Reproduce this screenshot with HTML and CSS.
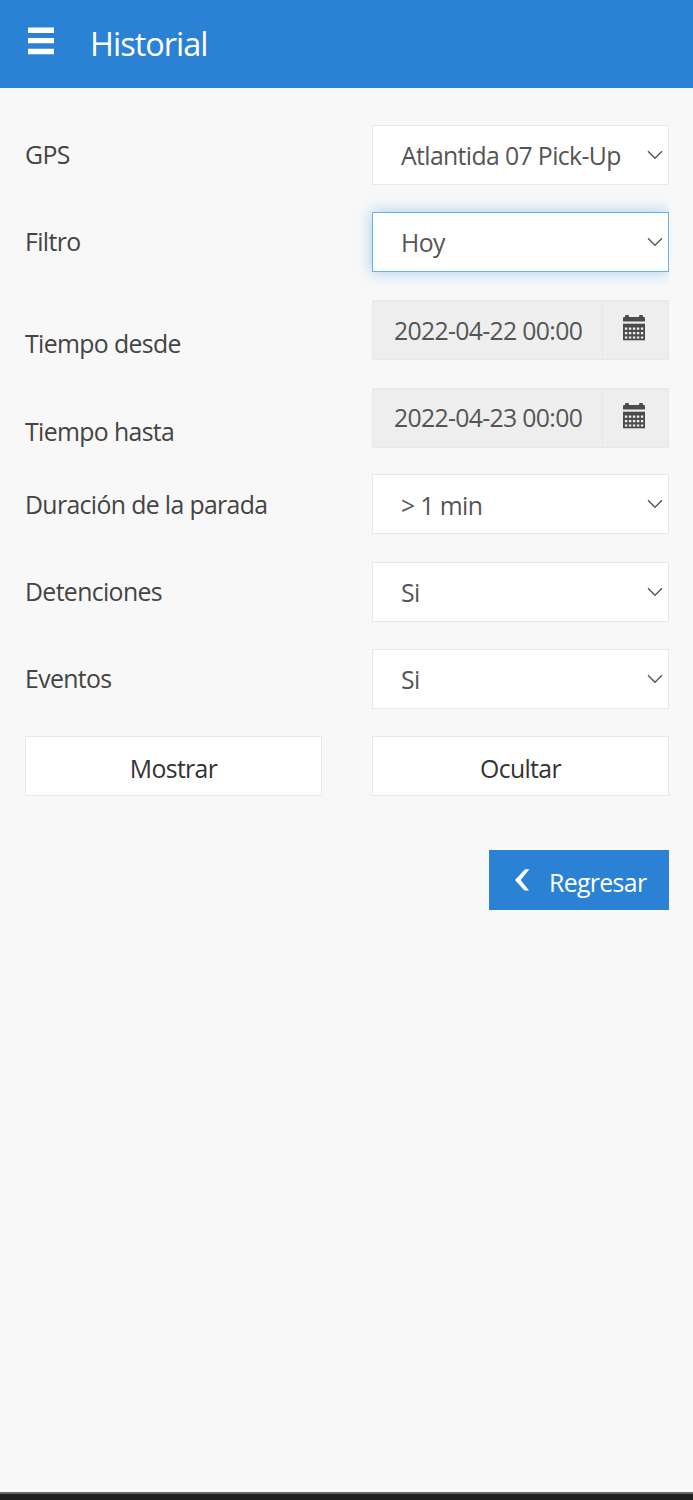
FILE: index.html
```html
<!DOCTYPE html>
<html lang="es">
<head>
  <meta charset="UTF-8">
  <meta name="viewport" content="width=device-width, initial-scale=1.0">
  <title>Historial</title>
  <link rel="stylesheet" href="styles.css">
</head>
<body>
  <!-- Icons -->
  <svg class="sprite">
    <symbol id="arrow" viewBox="0 0 16 10">
      <path d="M1 1.2L8 8.2L15 1.2" fill="none" stroke="currentColor" stroke-width="1.4"/>
    </symbol>
    <symbol id="calendar" viewBox="0 0 22 26">
      <path fill="currentColor" d="M0 6.5V3.2Q0 2 1.2 2H2V1.2Q2 0 3.2 0H4.8Q6 0 6 1.2V2H16V1.2Q16 0 17.2 0H18.8Q20 0 20 1.2V2H20.8Q22 2 22 3.2V6.5Z"/>
      <path fill="currentColor" d="M0 8.7H22V25.3H0Z"/>
      <path stroke="#eeeeee" stroke-width="2.2" stroke-dasharray="2.4 1.6" d="M1.9 13.6H20.2M1.9 18.1H20.2M1.9 22.5H20.2"/>
    </symbol>
  </svg>

  <header>
    <button class="menu">
      <svg width="26" height="28" viewBox="0 0 26 28"><path fill="#fff" d="M0 .4H26V6H0ZM0 10.9H26V16.3H0ZM0 21.7H26V27.2H0Z"/></svg>
    </button>
    <h1>Historial</h1>
  </header>

  <main>
    <form class="historial">
      <div class="row">
        <label for="gps">GPS</label>
        <div class="select">
          <select id="gps"><option>Atlantida 07 Pick-Up</option></select>
          <svg class="arrow"><use href="#arrow"/></svg>
        </div>
      </div>
      <div class="row">
        <label for="filtro">Filtro</label>
        <div class="select active">
          <select id="filtro"><option>Hoy</option></select>
          <svg class="arrow"><use href="#arrow"/></svg>
        </div>
      </div>
      <div class="row row-date">
        <label for="desde">Tiempo desde</label>
        <div class="date">
          <input id="desde" type="text" value="2022-04-22 00:00" readonly>
          <span class="addon"><svg class="calendar"><use href="#calendar"/></svg></span>
        </div>
      </div>
      <div class="row row-date">
        <label for="hasta">Tiempo hasta</label>
        <div class="date">
          <input id="hasta" type="text" value="2022-04-23 00:00" readonly>
          <span class="addon"><svg class="calendar"><use href="#calendar"/></svg></span>
        </div>
      </div>
      <div class="row">
        <label for="parada">Duración de la parada</label>
        <div class="select">
          <select id="parada"><option>&gt; 1 min</option></select>
          <svg class="arrow"><use href="#arrow"/></svg>
        </div>
      </div>
      <div class="row">
        <label for="detenciones">Detenciones</label>
        <div class="select">
          <select id="detenciones"><option>Si</option></select>
          <svg class="arrow"><use href="#arrow"/></svg>
        </div>
      </div>
      <div class="row">
        <label for="eventos">Eventos</label>
        <div class="select">
          <select id="eventos"><option>Si</option></select>
          <svg class="arrow"><use href="#arrow"/></svg>
        </div>
      </div>
      <div class="row">
        <button type="button" class="btn">Mostrar</button>
        <button type="button" class="btn">Ocultar</button>
      </div>
    </form>

    <button class="btn-back">
      <svg width="15" height="22" viewBox="0 0 15 22"><path fill="#fff" d="M9.6 .8Q10 .3 11 .3H14.4L5.6 11L14 21.6H10.6Q9.4 21.6 9 21L0 11Z"/></svg>
      <span>Regresar</span>
    </button>
  </main>

  <footer></footer>
</body>
</html>
```
FILE: styles.css
```css
:root {
  --azul: #2b82d4;
  --fondo: #f8f8f8;
  --borde: #e8e8e8;
  --gris: #eeeeee;
  --texto: #444444;
  --texto-campo: #555555;
}

* {
  box-sizing: border-box;
}

body {
  margin: 0;
  min-height: 1500px;
  display: flex;
  flex-direction: column;
  background: var(--fondo);
  color: var(--texto);
  font-family: 'Open Sans', sans-serif;
  font-size: 24.8px;
  letter-spacing: -0.63px;
}

button, input, select {
  font-family: inherit;
  font-size: inherit;
  letter-spacing: inherit;
  border-radius: 0;
  margin: 0;
}

svg {
  display: block;
  flex-shrink: 0;
}

.sprite {
  display: none;
}

header {
  height: 88.4px;
  padding-left: 28px;
  display: flex;
  align-items: center;
  background: var(--azul);
  color: #fff;
}

.menu {
  padding: 0 0 7px;
  border: none;
  background: none;
}

h1 {
  margin: 0 0 2px 36px;
  font-size: 32.5px;
  font-weight: normal;
  letter-spacing: -1px;
}

main {
  flex: 1;
  padding: 36.2px 24px 0 25px;
  display: flex;
  flex-direction: column;
}

.historial {
  display: grid;
  gap: 27.4px;
}

.row {
  height: 60px;
  display: grid;
  grid-template-columns: 1fr 1fr;
  column-gap: 50px;
  align-items: center;
}

.row label {
  padding-bottom: 1px;
}

.row-date label {
  padding-top: 27px;
}

.select {
  position: relative;
  height: 60px;
}

.select select {
  width: 100%;
  height: 100%;
  padding: 1px 30px 0 28px;
  border: 1.5px solid var(--borde);
  background: #fff;
  color: var(--texto-campo);
  appearance: none;
  outline: none;
}

/* el brillo se corta en el borde derecho */
.active {
  clip-path: inset(-30px 0 -30px -30px);
}

.active select {
  border-color: #66afe9;
  box-shadow: 0 0 14px rgba(102, 175, 233, 0.6);
}

.arrow {
  position: absolute;
  right: 6px;
  top: 25px;
  width: 16px;
  height: 10px;
  color: var(--texto-campo);
}

.date {
  display: flex;
  height: 60px;
  border: 1px solid var(--borde);
  background: var(--gris);
}

.date input {
  width: 230px;
  padding: 0 20px 1px 21px;
  border: none;
  border-right: 1px solid var(--borde);
  background: none;
  color: var(--texto-campo);
  letter-spacing: -0.68px;
  outline: none;
}

.addon {
  flex: 1;
  display: flex;
  justify-content: center;
  padding: 14px 3px 0 0;
  color: #4c4c4c;
}

.calendar {
  width: 22px;
  height: 26px;
}

.btn {
  height: 60px;
  padding: 3px 0 0;
  border: 1.5px solid var(--borde);
  background: #fff;
  color: #333;
}

.btn-back {
  align-self: flex-end;
  width: 180px;
  height: 60px;
  margin-top: 54px;
  padding: 0 0 0 26px;
  display: flex;
  align-items: center;
  gap: 19px;
  border: none;
  background: var(--azul);
  color: #fff;
}

.btn-back span {
  padding-top: 4px;
}

footer {
  height: 8px;
  border-top: 2px solid #666;
  background: #1f1f1f;
}
```
